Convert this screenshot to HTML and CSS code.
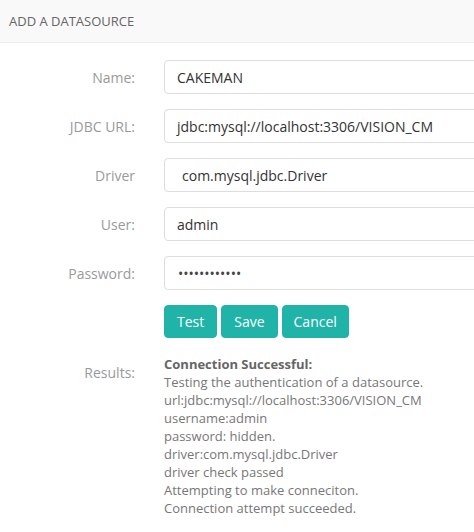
FILE: index.html
```html
<!DOCTYPE html>
<html>
<head>
<meta charset="utf-8">
<link rel="stylesheet" href="styles.css">
</head>
<body>
<div class="panel">
  <div class="panel-head">ADD A DATASOURCE</div>
  <div class="form">
    <div class="row">
      <label class="lbl">Name:</label>
      <div class="field">CAKEMAN</div>
    </div>
    <div class="row">
      <label class="lbl">JDBC URL:</label>
      <div class="field">jdbc:mysql://localhost:3306/VISION_CM</div>
    </div>
    <div class="row">
      <label class="lbl">Driver</label>
      <div class="field field-indent">com.mysql.jdbc.Driver</div>
    </div>
    <div class="row">
      <label class="lbl">User:</label>
      <div class="field">admin</div>
    </div>
    <div class="row">
      <label class="lbl">Password:</label>
      <div class="field field-pass">••••••••••••</div>
    </div>
    <div class="row row-buttons">
      <span class="lbl"></span>
      <div class="buttons">
        <button class="btn">Test</button>
        <button class="btn">Save</button>
        <button class="btn btn-cancel">Cancel</button>
      </div>
    </div>
    <div class="row row-results">
      <label class="lbl lbl-results">Results:</label>
      <div class="results">
        <div class="res-title">Connection Successful:</div>
        <div>Testing the authentication of a datasource.</div>
        <div>url:jdbc:mysql://localhost:3306/VISION_CM</div>
        <div>username:admin</div>
        <div>password: hidden.</div>
        <div>driver:com.mysql.jdbc.Driver</div>
        <div>driver check passed</div>
        <div>Attempting to make conneciton.</div>
        <div>Connection attempt succeeded.</div>
      </div>
    </div>
  </div>
</div>
</body>
</html>
```
FILE: styles.css
```css
html, body {
  margin: 0;
  padding: 0;
  background: #ffffff;
  overflow: hidden;
}
body {
  font-family: "Open Sans", "Liberation Sans", sans-serif;
  width: 474px;
  height: 532px;
}
.panel-head {
  height: 43px;
  box-sizing: border-box;
  background: #f9f9f9;
  border-bottom: 1px solid #ebebf0;
  padding: 0 9px;
  display: flex;
  align-items: center;
  font-size: 13px;
  color: #666666;
}
.form {
  padding-top: 17px;
}
.row {
  display: grid;
  grid-template-columns: 135px 330px;
  column-gap: 29px;
  align-items: center;
  margin-bottom: 15px;
}
.lbl {
  text-align: right;
  font-size: 14px;
  color: #9a9a9a;
}
.field {
  height: 34px;
  box-sizing: border-box;
  border: 1px solid #dddddd;
  border-radius: 4px;
  padding: 0 12px;
  display: flex;
  align-items: center;
  font-size: 14px;
  color: #333333;
  white-space: nowrap;
}
.field-indent {
  padding-left: 17px;
}
.field-pass {
  font-size: 14px;
  color: #444444;
  padding-left: 13px;
}
.row-buttons {
  margin-bottom: 17px;
}
.buttons {
  display: flex;
  gap: 4px;
}
.btn {
  height: 33px;
  border: 1px solid #20b2aa;
  background: #20b4a9;
  color: #ffffff;
  border-radius: 4px;
  padding: 0 12px;
  font-family: "Open Sans", "Liberation Sans", sans-serif;
  font-size: 14px;
  cursor: pointer;
}
.btn-cancel {
  padding: 0 11px;
}
.row-results {
  align-items: start;
}
.lbl-results {
  padding-top: 8px;
}
.results {
  font-size: 13px;
  line-height: 18px;
  color: #777777;
  white-space: nowrap;
}
.res-title {
  font-weight: bold;
  color: #666666;
}
```
